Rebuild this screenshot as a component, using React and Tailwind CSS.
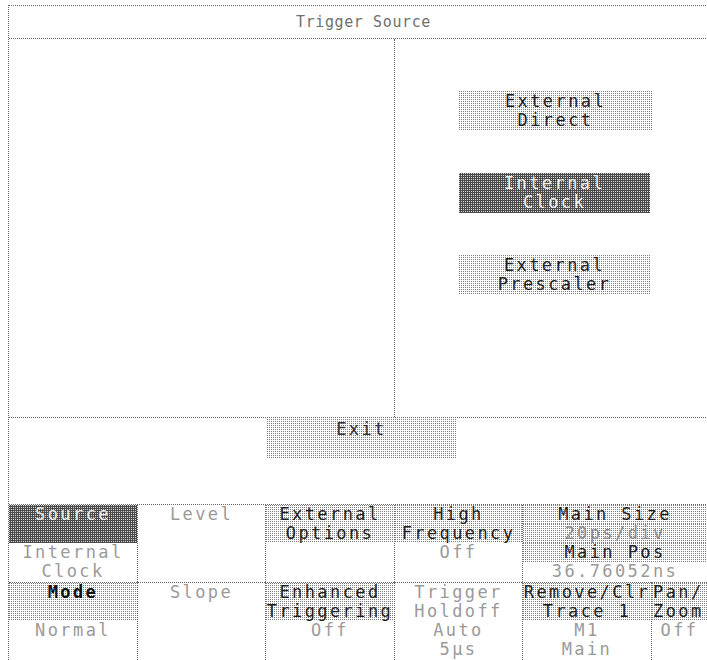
import React from "react";

// 2x2 pixel dither: one "dot" pixel per tile, the other three covered by the two gradients
const LIGHT =
  "bg-[#7c7c7c] bg-[linear-gradient(90deg,transparent_1px,#ffffff_1px),linear-gradient(transparent_1px,#ffffff_1px)] bg-[length:2px_2px]";
const DARK =
  "bg-[#d6d6d6] bg-[linear-gradient(90deg,transparent_1px,#4a4a4a_1px),linear-gradient(transparent_1px,#4a4a4a_1px)] bg-[length:2px_2px]";
const LINE = "h-[19px] leading-[19px] text-center whitespace-pre";
const BD = "border-[#6a6a6a] border-dotted";

function Lines({ items, bg = "", color }) {
  return (
    <div className={bg}>
      {items.map((t, i) => (
        <div key={i} className={`${LINE} ${color}`}>
          {t}
        </div>
      ))}
    </div>
  );
}

export default function App() {
  return (
    <div
      className="w-[707px] h-[660px] overflow-hidden bg-white pl-2 pt-[5px] text-[17px] tracking-[2.4px]"
      style={{ fontFamily: '"DejaVu Sans Mono", "Liberation Mono", monospace' }}
    >
      <div className={`h-full w-[710px] border-l border-t ${BD} flex flex-col`}>
        {/* title */}
        <div className="h-[32px] flex items-center justify-center text-[15px] tracking-[0.6px] text-[#6f6f6f]">
          Trigger Source
        </div>

        {/* main area */}
        <div className={`h-[379px] border-t ${BD} flex`}>
          <div className="w-[385px]" />
          <div className={`flex-1 border-l ${BD} flex flex-col pl-[64px] pt-[52px] gap-[42px]`}>
            <div className={`w-[193px] h-[40px] pt-[1px] ${LIGHT}`}>
              <div className={`${LINE} text-[#1e1e1e]`}>External</div>
              <div className={`${LINE} text-[#1e1e1e]`}>Direct</div>
            </div>
            <div className={`w-[191px] h-[40px] pt-[1px] ${DARK}`}>
              <div className={`${LINE} text-[#f0f0f0]`}>Internal</div>
              <div className={`${LINE} text-[#f0f0f0]`}>Clock</div>
            </div>
            <div className={`w-[191px] h-[40px] pt-[1px] ${LIGHT}`}>
              <div className={`${LINE} text-[#1e1e1e]`}>External</div>
              <div className={`${LINE} text-[#1e1e1e]`}>Prescaler</div>
            </div>
          </div>
        </div>

        {/* exit area */}
        <div className={`h-[87px] border-t ${BD} pl-[258px] pt-[1px]`}>
          <div className={`w-[189px] h-[40px] pt-[1px] ${LIGHT}`}>
            <div className={`${LINE} text-[#333]`}>Exit</div>
          </div>
        </div>

        {/* softkeys */}
        <div className={`flex-1 border-t ${BD} grid grid-cols-[128px_128px_129px_128px_129px_1fr] grid-rows-[77px_1fr]`}>
          <div>
            <Lines items={["Source", " "]} bg={DARK} color="text-[#ececec]" />
            <Lines items={["Internal", "Clock"]} color="text-[#9a9a9a]" />
          </div>
          <div className={`border-l ${BD}`}>
            <Lines items={["Level"]} color="text-[#9a9a9a]" />
          </div>
          <div className={`border-l ${BD}`}>
            <Lines items={["External", "Options"]} bg={LIGHT} color="text-[#1e1e1e]" />
          </div>
          <div className={`border-l ${BD}`}>
            <Lines items={["High", "Frequency"]} bg={LIGHT} color="text-[#1e1e1e]" />
            <Lines items={["Off"]} color="text-[#9a9a9a]" />
          </div>
          <div className={`col-span-2 border-l ${BD} w-[185px]`}>
            <Lines items={["Main Size"]} bg={LIGHT} color="text-[#1e1e1e]" />
            <Lines items={["20ps/div"]} bg={LIGHT} color="text-[#8a8a8a]" />
            <Lines items={["Main Pos"]} bg={LIGHT} color="text-[#1e1e1e]" />
            <Lines items={["36.76052ns"]} color="text-[#9a9a9a]" />
          </div>

          <div className={`border-t ${BD}`}>
            <Lines items={["Mode", " "]} bg={LIGHT} color="text-[#111] font-bold" />
            <Lines items={["Normal"]} color="text-[#9a9a9a]" />
          </div>
          <div className={`border-t border-l ${BD}`}>
            <Lines items={["Slope"]} color="text-[#9a9a9a]" />
          </div>
          <div className={`border-t border-l ${BD}`}>
            <Lines items={["Enhanced", "Triggering"]} bg={LIGHT} color="text-[#1e1e1e]" />
            <Lines items={["Off"]} color="text-[#9a9a9a]" />
          </div>
          <div className={`border-t border-l ${BD}`}>
            <Lines items={["Trigger", "Holdoff", "Auto", "5µs"]} color="text-[#9a9a9a]" />
          </div>
          <div className={`border-t border-l ${BD}`}>
            <Lines items={["Remove/Clr", "Trace 1"]} bg={LIGHT} color="text-[#1e1e1e]" />
            <Lines items={["M1", "Main"]} color="text-[#9a9a9a]" />
          </div>
          <div className={`border-t border-l ${BD} w-[56px]`}>
            <div className={`${LIGHT} text-left pl-[1px]`}>
              <div className="h-[19px] leading-[19px] text-[#1e1e1e]">Pan/</div>
              <div className="h-[19px] leading-[19px] text-[#1e1e1e]">Zoom</div>
            </div>
            <div className={`${LINE} text-[#9a9a9a]`}>Off</div>
          </div>
        </div>
      </div>
    </div>
  );
}
